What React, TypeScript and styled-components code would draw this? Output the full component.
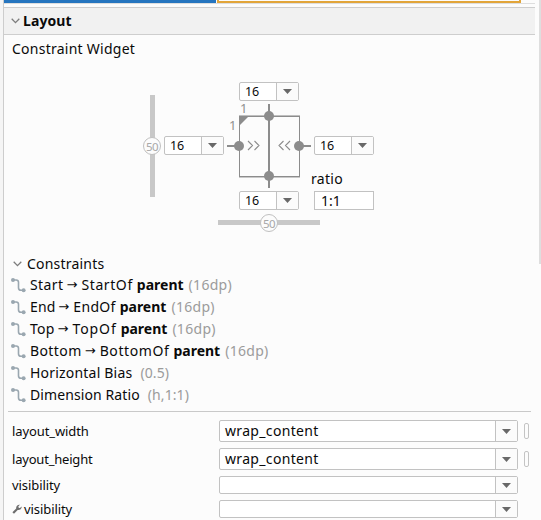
import React from 'react';
import styled, { createGlobalStyle } from 'styled-components';

const Global = createGlobalStyle`
  * { box-sizing: border-box; }
  body {
    margin: 0;
    background: #fcfcfc;
    color: #0a0a0a;
    font: 14px/20px "Noto Sans", sans-serif;
    overflow: hidden;
  }
`;

const Window = styled.div`
  display: flex;
  width: 541px;
  height: 520px;
  overflow: hidden;
`;
const Gutter = styled.div`
  width: 4px;
  flex: none;
  background: #f5f5f5;
  border-right: 1px solid #cdcdcd;
`;
const Panel = styled.main`
  width: 531px;
  flex: none;
  display: flex;
  flex-direction: column;
`;
const ScrollTrack = styled.div`
  width: 6px;
  flex: none;
  display: flex;
  justify-content: flex-end;
`;
const ScrollThumb = styled.div`
  width: 2px;
  height: 264px;
  background: #dedede;
`;

const TabStrip = styled.div`
  height: 7px;
  flex: none;
  display: flex;
  align-items: flex-start;
`;
const ActiveTab = styled.div`
  width: 212px;
  height: 3px;
  margin-right: 1px;
  background: #2675bf;
`;
const WarningTab = styled.div`
  width: 304px;
  height: 3px;
  border: solid #e2a53a;
  border-width: 0 2px 2px;
`;
const StripLine = styled.div`
  height: 1px;
  margin: -4px 0 3px;
  flex: none;
  background: #dedede;
`;

const SectionHeader = styled.header`
  height: 28px;
  flex: none;
  display: flex;
  align-items: center;
  padding: 0 0 0 7px;
  border: solid #cecece;
  border-width: 1px 0;
  background: #f1f1f1;
  font-weight: 700;
`;
const Word = styled.span<{ $track?: number; $bold?: boolean; $muted?: boolean; $left?: number }>`
  white-space: pre;
  letter-spacing: ${(p) => p.$track ?? 0}px;
  font-weight: ${(p) => (p.$bold ? 700 : 400)};
  color: ${(p) => (p.$muted ? '#9b9b9b' : '#0a0a0a')};
  margin-left: ${(p) => p.$left ?? 0}px;
`;
const Subtitle = styled.div`
  height: 47px;
  flex: none;
  padding: 4px 0 0 8px;
`;

const WidgetEditor = styled.section`
  height: 171px;
  flex: none;
  margin-left: 139px;
  display: grid;
  grid-template-columns: 18px 3px 60px 15px 60px 15px 60px;
  grid-template-rows: 19px 90px 19px 22px;
`;
const VerticalBias = styled.div`
  grid-area: 1 / 1 / 4 / 2;
  margin-top: 13px;
  height: 102px;
  display: flex;
  align-items: center;
  justify-content: center;
  background: linear-gradient(#c8c8c8, #c8c8c8) center / 5px 100% no-repeat;
`;
const HorizontalBias = styled.div`
  grid-area: 4 / 5;
  justify-self: center;
  align-self: start;
  margin-top: 3px;
  width: 102px;
  height: 19px;
  display: flex;
  align-items: center;
  justify-content: center;
  background: linear-gradient(#c8c8c8, #c8c8c8) center / 100% 5px no-repeat;
`;
const Knob = styled.div`
  width: 18px;
  height: 18px;
  flex: none;
  border: 1px solid #c0c0c0;
  border-radius: 50%;
  background: #fcfcfc;
  color: #a8a8a8;
  font-size: 11.5px;
  line-height: 17px;
  display: flex;
  justify-content: center;
  letter-spacing: -0.6px;
`;

const Combo = styled.div<{ $height: number }>`
  height: ${(p) => p.$height}px;
  display: flex;
  border: 1px solid #c2c2c2;
  border-radius: 2px;
  background: #fff;
`;
const ComboValue = styled.div<{ $small?: boolean }>`
  flex: 1;
  padding-left: 5px;
  font-size: ${(p) => (p.$small ? 12.5 : 14)}px;
  line-height: ${(p) => (p.$small ? 17 : 20)}px;
  letter-spacing: ${(p) => (p.$small ? -0.2 : 0.33)}px;
`;
const ComboButton = styled.div`
  width: 22px;
  flex: none;
  display: flex;
  align-items: center;
  justify-content: center;
  border-left: 1px solid #c2c2c2;
  background: #fbfbfb;
`;
const MarginSlot = styled.div<{ $area: string }>`
  grid-area: ${(p) => p.$area};
  align-self: center;
`;
const RaisedSlot = styled(MarginSlot)`
  align-self: start;
  margin-top: 35px;
`;
const Drawing = styled.svg`
  grid-area: 2 / 4 / 3 / 7;
  display: block;
  overflow: visible;
`;
const DrawingLabel = styled.text`
  font: 13px "Noto Sans", sans-serif;
  fill: #909090;
`;
const RatioLabel = styled.label`
  grid-area: 2 / 7;
  align-self: end;
  margin: 0 0 2px -3px;
  letter-spacing: 0.3px;
`;
const RatioField = styled.div`
  grid-area: 3 / 7;
  height: 19px;
  padding-left: 6px;
  border: 1px solid #c2c2c2;
  background: #fff;
  line-height: 18px;
`;

const Constraints = styled.section`
  flex: none;
  height: 158px;
`;
const ConstraintsTitle = styled.div`
  height: 21px;
  display: flex;
  align-items: center;
  padding-left: 9px;
`;
const ConstraintRow = styled.div`
  height: 22px;
  display: flex;
  align-items: center;
`;
const LinkIcon = styled.svg`
  width: 15px;
  height: 15px;
  margin: 0 4px 0 7px;
  flex: none;
`;
const Arrow = styled.span`
  width: 13px;
  margin: 0 2px 0 3px;
  font-size: 13px;
  font-family: "DejaVu Sans", sans-serif;
`;

const Properties = styled.section`
  margin: 0 4px 0 4px;
  border-top: 1px solid #c9c9c9;
  padding-top: 8px;
  display: flex;
  flex-direction: column;
  gap: 6px;
`;
const PropertyRow = styled.div<{ $height: number }>`
  height: ${(p) => p.$height}px;
  display: grid;
  grid-template-columns: 211px 299px 5px;
  align-items: center;
`;
const PropertyName = styled.div`
  display: flex;
  align-items: center;
  padding-left: 4px;
  font-size: 13px;
  line-height: 18px;
`;
const Indicator = styled.div`
  width: 5px;
  height: 16px;
  margin-left: 6px;
  border: 1px solid #c4c4c4;
  border-radius: 2px;
`;
const WrenchIcon = styled.svg`
  width: 10px;
  height: 10px;
  margin: 0 2px 0 0;
`;

const Chevron = () => (
  <svg width="9" height="6" viewBox="0 0 9 6">
    <path d="M0.7 0.8 4.5 4.6 8.3 0.8" fill="none" stroke="#7d7d7d" strokeWidth="1.3" />
  </svg>
);

const DropArrow = () => (
  <svg width="9" height="5" viewBox="0 0 9 5">
    <path d="M0 0h9L4.5 5z" fill="#686868" />
  </svg>
);

const MarginCombo = () => (
  <Combo $height={19}>
    <ComboValue $small>16</ComboValue>
    <ComboButton>
      <DropArrow />
    </ComboButton>
  </Combo>
);

const ConstraintBox = () => (
  <Drawing width="90" height="90" viewBox="0 0 90 90">
    <g fill="#8c8c8c">
      <path d="M15 14h61v1h-61z" opacity=".55" />
      <path d="M15 15h61v1h-61z" />
      <path d="M15 75h61v1h-61z" />
      <path d="M15 76h61v1h-61z" opacity=".45" />
      <path d="M15 15h1v61h-1zM75 15h1v61h-1z" />
      <path d="M44 3h2v84h-2z" />
      <path d="M3 44h10v2h-10zM77 44h10v2h-10z" />
      <path d="M16 16h8l-8 8z" />
      <circle cx="45" cy="15" r="5" />
      <circle cx="45" cy="75" r="5" />
      <circle cx="15" cy="45" r="5" />
      <circle cx="75" cy="45" r="5" />
    </g>
    <path
      d="M24 40l4.500 4.500-4.500 4.500M30.500 40l4.500 4.500-4.500 4.500M59.500 40l-4.500 4.500 4.500 4.500M66 40l-4.500 4.500 4.500 4.500"
      fill="none"
      stroke="#8c8c8c"
      strokeWidth="1.1"
    />
    <DrawingLabel x="16" y="12">1</DrawingLabel>
    <DrawingLabel x="5" y="29">1</DrawingLabel>
  </Drawing>
);

const Link = () => (
  <LinkIcon viewBox="0 0 15 15">
    <path d="M2 2h3.2q2.3 0 2.3 2.3v5.4q0 2.6 2.500 2.6h3" fill="none" stroke="#9aa7b0" strokeWidth="1.6" />
    <circle cx="2" cy="2.1" r="2" fill="#9aa7b0" />
    <circle cx="12.6" cy="12.3" r="2" fill="#9aa7b0" />
  </LinkIcon>
);

const sides = [
  { from: 'Start', to: 'StartOf', fromTrack: 0.4, toTrack: 0.6 },
  { from: 'End', to: 'EndOf', fromTrack: 0.1, toTrack: 0.3 },
  { from: 'Top', to: 'TopOf', fromTrack: 0.2, toTrack: 0.9 },
  { from: 'Bottom', to: 'BottomOf', fromTrack: 0.4, toTrack: 0.6 },
];

const values = [
  { name: 'Horizontal Bias', value: '(0.5)', track: 0.2 },
  { name: 'Dimension Ratio', value: '(h,1:1)', track: 0.1 },
];

const properties = [
  { name: 'layout_width', value: 'wrap_content', height: 22, track: -0.1 },
  { name: 'layout_height', value: 'wrap_content', height: 22, track: -0.2 },
  { name: 'visibility', value: '', height: 18, track: -0.08 },
  { name: 'visibility', value: '', height: 18, track: -0.08, tools: true },
];

export default function App() {
  return (
    <Window>
      <Global />
      <Gutter />
      <Panel>
        <TabStrip>
          <ActiveTab />
          <WarningTab />
        </TabStrip>
        <StripLine />
        <SectionHeader>
          <Chevron />
          <Word $bold $track={0.1} $left={3}>Layout</Word>
        </SectionHeader>
        <Subtitle>
          <Word $track={0.25}>Constraint Widget</Word>
        </Subtitle>
        <WidgetEditor>
          <VerticalBias>
            <Knob>50</Knob>
          </VerticalBias>
          <MarginSlot $area="1 / 5"><MarginCombo /></MarginSlot>
          <RaisedSlot $area="2 / 3"><MarginCombo /></RaisedSlot>
          <ConstraintBox />
          <RaisedSlot $area="2 / 7"><MarginCombo /></RaisedSlot>
          <RatioLabel>ratio</RatioLabel>
          <MarginSlot $area="3 / 5"><MarginCombo /></MarginSlot>
          <RatioField>1:1</RatioField>
          <HorizontalBias>
            <Knob>50</Knob>
          </HorizontalBias>
        </WidgetEditor>
        <Constraints>
          <ConstraintsTitle>
            <Chevron />
            <Word $track={0.2} $left={5}>Constraints</Word>
          </ConstraintsTitle>
          {sides.map((s) => (
            <ConstraintRow key={s.from}>
              <Link />
              <Word $track={s.fromTrack}>{s.from}</Word>
              <Arrow>→</Arrow>
              <Word $track={s.toTrack}>{s.to}</Word>
              <Word $bold $left={4}>parent</Word>
              <Word $muted $track={0.3} $left={5}>(16dp)</Word>
            </ConstraintRow>
          ))}
          {values.map((v) => (
            <ConstraintRow key={v.name}>
              <Link />
              <Word $track={v.track}>{v.name}</Word>
              <Word $muted $track={0.1} $left={8}>{v.value}</Word>
            </ConstraintRow>
          ))}
        </Constraints>
        <Properties>
          {properties.map((p, i) => (
            <PropertyRow key={i} $height={p.height}>
              <PropertyName>
                {p.tools && (
                  <WrenchIcon viewBox="0 0 10 10">
                    <path d="M0.4 8.2 4.2 4.6C3.8 2.4 5.6.2 7.9.7L6.3 2.5l.4 1.2 1.2.4L9.7 2.4C10 4.7 8 6.4 5.7 5.9L2 9.7z" fill="#6e6e6e" />
                  </WrenchIcon>
                )}
                <Word $track={p.track}>{p.name}</Word>
              </PropertyName>
              <Combo $height={p.height}>
                <ComboValue>{p.value}</ComboValue>
                <ComboButton>
                  <DropArrow />
                </ComboButton>
              </Combo>
              {p.value && <Indicator />}
            </PropertyRow>
          ))}
        </Properties>
      </Panel>
      <ScrollTrack>
        <ScrollThumb />
      </ScrollTrack>
    </Window>
  );
}
